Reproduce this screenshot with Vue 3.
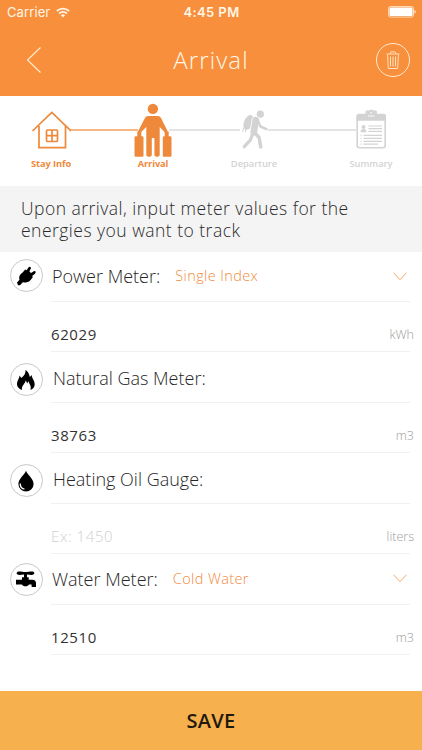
<script setup>
import { ref } from 'vue';

const steps = [
  { key: 'stay', label: 'Stay Info', active: true, width: 40 },
  { key: 'arrival', label: 'Arrival', active: true, width: 38 },
  { key: 'departure', label: 'Departure', active: false, width: 28 },
  { key: 'summary', label: 'Summary', active: false, width: 30 }
];

const meters = ref([
  { key: 'power', label: 'Power Meter:', option: 'Single Index', value: '62029', unit: 'kWh' },
  { key: 'gas', label: 'Natural Gas Meter:', option: '', value: '38763', unit: 'm3' },
  { key: 'oil', label: 'Heating Oil Gauge:', option: '', value: '', placeholder: 'Ex: 1450', unit: 'liters' },
  { key: 'water', label: 'Water Meter:', option: 'Cold Water', value: '12510', unit: 'm3' }
]);
</script>

<template>
  <div class="screen">
    <header class="header">
      <div class="status-bar">
        <div class="carrier">
          <span>Carrier</span>
          <svg width="14" height="11" viewBox="0 0 14 11" fill="none" stroke="#fff6e6" stroke-width="1.8">
            <path d="M.8 4.1a8.9 8.9 0 0 1 12.4 0M3.1 6.5a5.6 5.6 0 0 1 7.8 0" />
            <path d="M7 10.5 4.9 8.3a3 3 0 0 1 4.2 0z" fill="#fff6e6" stroke="none" />
          </svg>
        </div>
        <span class="time">4:45 PM</span>
        <svg class="battery" width="28" height="12" viewBox="0 0 28 12">
          <rect x=".5" y=".5" width="25" height="10.6" rx="2" fill="none" stroke="#fddcb9" />
          <rect x="1.5" y="1.5" width="23" height="8.6" rx="1" fill="#fff" />
          <path d="M26.5 4c1.6.6 1.6 3 0 3.6z" fill="#fff" />
        </svg>
      </div>
      <div class="nav-bar">
        <button class="back">
          <svg width="16" height="28" viewBox="0 0 16 28" fill="none" stroke="#ffeacb" stroke-width="1.2">
            <path d="M14.5 1.5 1.5 14l13 12.5" />
          </svg>
        </button>
        <h1>Arrival</h1>
        <button class="trash">
          <svg width="14" height="19" viewBox="0 0 14 19" fill="none" stroke="#ffe3bf" stroke-width="1">
            <path d="M.5 3h13M4 2.7l1-1.9h4l1 1.9M1.6 3.5l.7 14h9.4l.7-14M4.5 5.5v10M7 5.5v10M9.5 5.5v10" />
          </svg>
        </button>
      </div>
    </header>

    <nav class="stepper">
      <template v-for="(step, i) in steps" :key="step.key">
        <span v-if="i > 0" :class="['connector', `connector-${i}`]"></span>
        <div :class="['step', { active: step.active }]" :style="{ width: step.width + 'px' }">
          <svg v-if="step.key === 'stay'" width="40" height="56" viewBox="0 0 40 56" fill="none" stroke="currentColor" stroke-width="1.7">
            <path d="M1.5 29 20.8 10.4 40 29M8 24v21.6h26.5V24" />
            <rect x="15.5" y="28" width="11" height="11.5" rx="1" />
            <path d="M21 28v11.5M15.5 33.7h11" />
          </svg>
          <svg v-else-if="step.key === 'arrival'" width="38" height="56" viewBox="0 0 38 56" fill="currentColor">
            <circle cx="18.9" cy="6.9" r="5.2" />
            <path d="M14.5 14h8.8c2 0 3.2.8 4 2.500l6.200 12.600c.7 1.800-1.400 3-2.600 1.500L25.700 25v28c0 2.400-5.300 2.400-5.300 0V36h-2.600v17c0 2.400-5.500 2.400-5.500 0V25l-5.600 5.600c-1.300 1.500-3.300.1-2.500-1.500l6.500-12.600c.8-1.700 1.900-2.500 3.800-2.500z" />
            <path d="M3.300 29.500h4v4.700H8c1 0 1.500.5 1.500 1.500v17.500c0 1-.5 1.500-1.500 1.500H2c-1 0-1.500-.5-1.500-1.500V35.700c0-1 .5-1.500 1.300-1.500h1.500zM30.700 29.500h4v4.700H36c1 0 1.500.5 1.500 1.500v17.500c0 1-.5 1.500-1.500 1.500h-5.700c-1 0-1.500-.5-1.500-1.500V35.700c0-1 .5-1.500 1.500-1.500h.4z" />
          </svg>
          <svg v-else-if="step.key === 'departure'" width="28" height="56" viewBox="0 0 28 56" fill="none" stroke="currentColor" stroke-linecap="round" stroke-linejoin="round">
            <circle cx="20.300" cy="12.200" r="3.600" fill="currentColor" stroke="none" />
            <ellipse cx="8.500" cy="20.500" rx="4.500" ry="7.800" transform="rotate(22 8.500 20.500)" fill="currentColor" stroke="none" />
            <path d="M3.600 26 2.600 29.500M6 27.500l-.5 2.500" stroke-width="1" />
            <path d="M15.800 18.500 13.800 30" stroke="#fff" stroke-width="8.500" />
            <path d="M15.800 18.300 13.800 30" stroke-width="6.800" />
            <path d="m17.500 18 3 6.500 6 2.600" stroke-width="2.500" />
            <path d="m14.800 31 4.300 4.500 1.600 9.400" stroke-width="3.500" />
            <path d="m13 31-2.700 7.200-6 6.500" stroke-width="3.300" />
          </svg>
          <svg v-else width="30" height="56" viewBox="0 0 30 56">
            <rect x="1.2" y="13" width="28" height="32.8" rx="2.5" fill="none" stroke="currentColor" stroke-width="1.6" />
            <path d="M.5 18.8V14c0-1.4.8-2.2 2.2-2.2h6.8V10c0-1 .5-1.5 1.5-1.5h2c.3-1.1 4.1-1.1 4.4 0h2c1 0 1.5.5 1.5 1.5v1.8h6.7c1.4 0 2.3.8 2.3 2.2v4.8z" fill="currentColor" />
            <path d="M12 14h6.5" stroke="#fff" stroke-width=".9" />
            <circle cx="15.2" cy="10.8" r=".8" fill="#fff" />
            <circle cx="7.5" cy="25" r="2" fill="currentColor" />
            <path d="M4.5 30.2c0-4.2 6-4.2 6 0z" fill="currentColor" />
            <path d="M12.5 24H26M12.5 26.7H26M12.5 29.3H26M7.5 33.3H26M7.5 36.3H26M7.5 39.3H26M7.5 42.2H22M4.5 33.3h1M4.5 36.3h1M4.5 39.3h1M4.5 42.2h1" stroke="currentColor" stroke-width="1.2" />
          </svg>
          <span class="step-label">{{ step.label }}</span>
        </div>
      </template>
    </nav>

    <p class="banner">Upon arrival, input meter values for the energies you want to track</p>

    <main class="meters">
      <section v-for="meter in meters" :key="meter.key" :class="['meter', `meter-${meter.key}`]">
        <div class="meter-icon">
          <svg v-if="meter.key === 'power'" width="22" height="22" viewBox="0 0 22 22">
            <path d="M2 17.500 4.500 14.800C3.600 11.200 5 9.300 7.600 7.400L10.200 4.600 11.600 5.200 13.600 2.200C14.600 1 16.600 2 15.800 3.600L14.400 6.400 16 8 18.800 6.200C20.300 5.600 21.400 7.100 20.200 8.400L17.200 11 17.800 12.300 15.800 14.800C13.800 17.200 11.400 18.200 7.800 17.200L5 20.200 3 20.200z" />
          </svg>
          <svg v-else-if="meter.key === 'gas'" width="22" height="22" viewBox="0 0 22 22">
            <path d="M10.5 1c3.4 2.1 3.6 4.8 4.5 7.1l1.600-2c.3 3.500 3 5.400 3.100 8.900.1 2.900-1.500 5-4.300 6 1.300-3.500-.8-5.700-2.100-8.700l-1.100 2.200-1.400-3.300c-.6 3.700-4.700 5.400-3.700 9.800C4 20.100 1.800 17.800 2 14.600c.2-3.200 2.300-5.100 2.600-8.200L6.300 9C9.200 6.700 10.800 4.400 10.500 1z" />
          </svg>
          <svg v-else-if="meter.key === 'oil'" width="22" height="22" viewBox="0 0 22 22">
            <path d="M11 .8c1.8 4.6 7.6 8 7.6 13.1A7.6 7.6 0 0 1 3.4 13.9C3.4 8.8 9.2 5.4 11 .8z" />
            <path d="M5.200 13.400c-.1 3.400 1.700 5.100 4.200 5.800" fill="none" stroke="#fff" stroke-width="1.3" />
          </svg>
          <svg v-else width="22" height="22" viewBox="0 0 22 22">
            <path d="M2.6 2.7C4 2 7.5 2.8 10.5 3c3-.2 6.500-1 7.900-.3 1.300.8 1.300 2.200 0 2.900-1.300.6-4.200.1-6.400-.2v2.800h1.700v2.500h3.800c2.400 0 3.500 1.200 3.500 3.500v3.900h-4.400v-2.700h-2.700c-.6 2.200-5.900 2.500-7 0H1V10.700h6V8.200h2V5.400c-2.200.3-5.100.8-6.400.2-1.300-.7-1.300-2.200 0-2.900z" />
          </svg>
        </div>
        <div class="meter-head">
          <label>{{ meter.label }}</label>
          <span v-if="meter.option" class="option">{{ meter.option }}</span>
          <svg v-if="meter.option" class="chevron" width="14" height="9" viewBox="0 0 14 9" fill="none" stroke="#f6a969" stroke-width="1">
            <path d="m.5.7 6.500 7 6.500-7" />
          </svg>
        </div>
        <div class="meter-value">
          <input v-model="meter.value" :placeholder="meter.placeholder" type="text">
          <span class="unit">{{ meter.unit }}</span>
        </div>
      </section>
    </main>

    <button class="save">SAVE</button>
  </div>
</template>

<style>
body {
  background: #fff;
}
</style>

<style scoped>
.screen {
  width: 422px;
  height: 750px;
  display: flex;
  flex-direction: column;
  background: #fff;
  font-family: "Open Sans", "Noto Sans", sans-serif;
  font-weight: 300;
  overflow: hidden;
}

button {
  border: none;
  background: none;
  padding: 0;
  font-family: inherit;
}

svg {
  display: block;
  flex: none;
}

.header {
  height: 96px;
  flex: none;
  background: #f78f3d;
  color: #fff6e6;
}

.status-bar {
  height: 24px;
  display: grid;
  grid-template-columns: 1fr auto 1fr;
  align-items: center;
  padding: 0 6px 0 7px;
  font-family: Inter, sans-serif;
  font-size: 13px;
  font-weight: 400;
}

.carrier {
  display: flex;
  align-items: center;
  gap: 6px;
  letter-spacing: 0.1px;
}

.time {
  font-weight: 600;
  letter-spacing: 0.4px;
}

.battery {
  justify-self: end;
}

.nav-bar {
  height: 72px;
  box-sizing: border-box;
  display: grid;
  grid-template-columns: 34px 1fr 34px;
  align-items: center;
  padding: 0 12px 0 26px;
}

.back {
  justify-self: start;
}

h1 {
  margin: 0 14px 2px 0;
  font-size: 24px;
  font-weight: 300;
  letter-spacing: 1.1px;
  text-align: center;
}

.trash {
  width: 34px;
  height: 34px;
  box-sizing: border-box;
  display: flex;
  align-items: center;
  justify-content: center;
  border: 1px solid #ffeacb;
  border-radius: 50%;
}

.stepper {
  height: 90px;
  box-sizing: border-box;
  flex: none;
  display: flex;
  align-items: flex-start;
  padding: 6px 0 0 31px;
}

.step {
  flex: none;
  display: flex;
  flex-direction: column;
  align-items: center;
  color: #d3d3d3;
}

.step.active {
  color: #ee893b;
}

.step-label {
  font-size: 9.3px;
  line-height: 12px;
  font-weight: 600;
  white-space: nowrap;
}

.active .step-label {
  font-weight: 700;
  letter-spacing: -0.1px;
}

.connector {
  height: 2px;
  flex: none;
  margin-top: 27px;
  background: #e4e4e4;
}

/* runs up to the traveller's left arm */
.connector-1 {
  width: 67px;
  margin-right: -4px;
  background: #f5b785;
}

.connector-2 {
  width: 71px;
  margin-left: -3px;
}

.connector-3 {
  width: 88px;
}

.banner {
  height: 66px;
  box-sizing: border-box;
  flex: none;
  margin: 0;
  padding: 12px 50px 0 21px;
  background: #f4f4f4;
  color: #2a2a2a;
  font-size: 17.5px;
  line-height: 21.5px;
  letter-spacing: 0.48px;
}

.meters {
  flex: 1;
}

.meter {
  display: grid;
  grid-template-columns: 42px 359px;
  grid-template-rows: 50.5px 50.5px;
  column-gap: 9px;
}

.meter-power {
  grid-template-rows: 49.5px 50.5px;
}

.meter-icon {
  width: 33px;
  height: 33px;
  box-sizing: border-box;
  margin: 11px 0 0 9.5px;
  display: flex;
  align-items: center;
  justify-content: center;
  border: 1px solid #c8c8c8;
  border-radius: 50%;
}

.meter-power .meter-icon {
  margin-top: 7px;
}

.meter-water .meter-icon {
  margin-top: 9px;
}

.meter-head,
.meter-value {
  grid-column: 2;
  box-sizing: border-box;
  display: flex;
  align-items: center;
  border-bottom: 1px solid #f1f1f1;
}

.meter-head {
  padding: 2px 2px 0 2px;
}

.meter-power .meter-head,
.meter-water .meter-head {
  padding: 0 3px 0 1px;
}

label {
  font-size: 18px;
  color: #262626;
  white-space: nowrap;
}

.option {
  margin: -1px 0 0 15px;
  font-size: 14.5px;
  letter-spacing: 0.38px;
  color: #f08a3c;
}

.chevron {
  margin-left: auto;
}

.meter-value {
  padding-top: 16px;
}

input {
  flex: 1;
  min-width: 0;
  padding: 0;
  border: none;
  outline: none;
  background: none;
  font-family: inherit;
  font-size: 15px;
  font-weight: 400;
  letter-spacing: 0.6px;
  color: #333;
}

input::placeholder {
  color: #cfcfcf;
  font-weight: 300;
  opacity: 1;
}

.unit {
  margin: 1px -4px 0 0;
  font-size: 12.5px;
  color: #9c9c9c;
}

.save {
  height: 59px;
  flex: none;
  background: #f7b04e;
  color: #20190d;
  font-size: 20px;
  font-weight: 600;
  letter-spacing: 0.3px;
}
</style>
